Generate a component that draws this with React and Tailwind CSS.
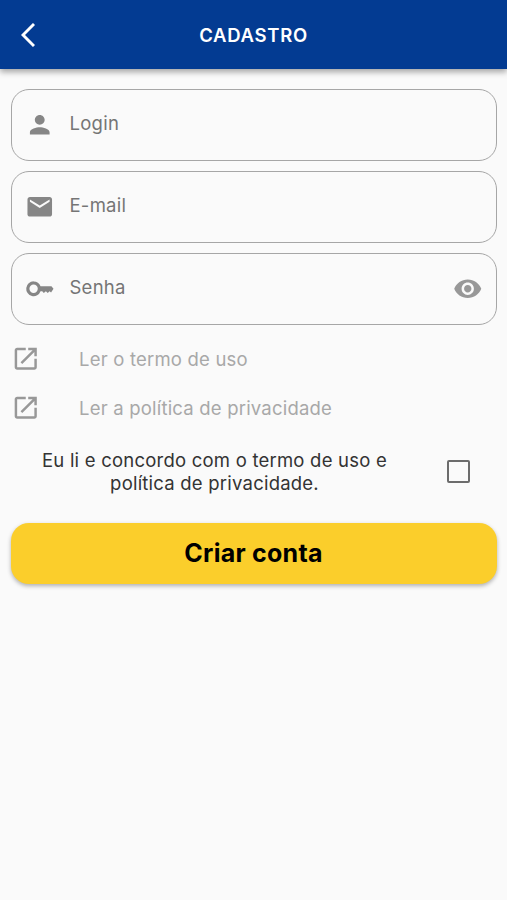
const PATHS = {
  person: 'M12 12c2.21 0 4-1.79 4-4s-1.79-4-4-4-4 1.79-4 4 1.79 4 4 4zm0 2c-2.67 0-8 1.34-8 4v2h16v-2c0-2.66-5.33-4-8-4z',
  mail: 'M20 4H4c-1.1 0-1.99.9-1.99 2L2 18c0 1.1.9 2 2 2h16c1.1 0 2-.9 2-2V6c0-1.1-.9-2-2-2zm0 4l-8 5-8-5V6l8 5 8-5v2z',
  eye: 'M12 4.5C7 4.5 2.73 7.61 1 12c1.73 4.39 6 7.5 11 7.5s9.27-3.11 11-7.5c-1.73-4.39-6-7.5-11-7.5zM12 17c-2.76 0-5-2.24-5-5s2.24-5 5-5 5 2.24 5 5-2.24 5-5 5zm0-8c-1.66 0-3 1.34-3 3s1.34 3 3 3 3-1.34 3-3-1.34-3-3-3z',
  open: 'M19 19H5V5h7V3H5c-1.11 0-2 .9-2 2v14c0 1.1.89 2 2 2h14c1.1 0 2-.9 2-2v-7h-2v7zM14 3v2h3.59l-9.83 9.83 1.41 1.41L19 6.41V10h2V3h-7z',
};

function Icon({ name, className = '' }) {
  return (
    <svg viewBox="0 0 24 24" fill="currentColor" className={`size-[29.5px] shrink-0 ${className}`}>
      <path d={PATHS[name]} />
    </svg>
  );
}

function KeyIcon() {
  return (
    <svg viewBox="0 0 24 24" fill="currentColor" className="size-[29.5px] shrink-0">
      <path
        fillRule="evenodd"
        d="M7 6a6 6 0 1 0 5.65 8H14l1.3 1.5 1.7-1.5 1.5 1.5 1.5-1.5 1.2 1L23.2 12 21.5 10h-8.85A6 6 0 0 0 7 6zm0 2.6a3.4 3.4 0 1 1 0 6.8 3.4 3.4 0 0 1 0-6.8z"
      />
    </svg>
  );
}

function Field({ icon, label, trailing }) {
  return (
    <div className="flex h-[72px] items-center rounded-[18px] border border-[#a6a6a6] pr-[13px] pl-[13px] text-[#868686]">
      {icon}
      <span className="ml-[15.5px] flex-1 pb-[4px] text-[18.5px] leading-6 tracking-[0.25px] text-[#757575]">{label}</span>
      {trailing}
    </div>
  );
}

function LinkRow({ label }) {
  return (
    <a className="flex h-[49px] items-center text-[#989898]">
      <Icon name="open" />
      <span className="ml-[39px] text-[18.5px] leading-6 tracking-[0.2px] text-[#a8a8a8]">{label}</span>
    </a>
  );
}

export default function App() {
  return (
    <div className="h-[900px] w-full overflow-hidden bg-[#fafafa] font-['Inter','Liberation_Sans',sans-serif]">
      <header className="relative grid h-[69px] grid-cols-[60px_1fr_60px] items-center bg-[#033b92] shadow-[0_3px_6px_rgba(0,0,0,0.35)]">
        <svg viewBox="0 0 14 24" className="ml-[21px] h-6 w-[14px]" fill="none" stroke="white" strokeWidth="2.9">
          <path d="M13 1 2 12l11 11" />
        </svg>
        <h1 className="text-center text-[18.5px] leading-6 font-semibold tracking-[0.7px] text-white">CADASTRO</h1>
      </header>
      <main className="px-[10.5px] pt-5">
        <div className="flex flex-col gap-[10px]">
          <Field icon={<Icon name="person" />} label="Login" />
          <Field icon={<Icon name="mail" />} label="E-mail" />
          <Field icon={<KeyIcon />} label="Senha" trailing={<Icon name="eye" className="text-[#989898]" />} />
        </div>
        <div className="mt-[9px]">
          <LinkRow label="Ler o termo de uso" />
          <LinkRow label="Ler a política de privacidade" />
        </div>
        <label className="mt-[17px] flex items-center">
          <span className="w-[408px] text-center text-[18.5px] leading-[23px] tracking-[0.22px] text-[#333333]">
            Eu li e concordo com o termo de uso e
            <br />
            política de privacidade.
          </span>
          <span className="mb-px ml-[28px] size-[23px] rounded-[2px] border-2 border-[#6c6c6c]" />
        </label>
        <button className="mt-7 flex h-[61px] w-full items-center justify-center rounded-[18px] bg-[#fbce2b] text-[25px] font-bold tracking-[0.25px] text-black shadow-[0_2px_4px_rgba(0,0,0,0.3)]">
          Criar conta
        </button>
      </main>
    </div>
  );
}
